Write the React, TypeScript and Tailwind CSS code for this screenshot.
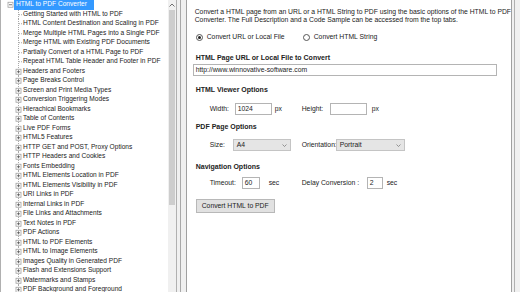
import React from 'react';

const children = [
  'Getting Started with HTML to PDF',
  'HTML Content Destination and Scaling in PDF',
  'Merge Multiple HTML Pages into a Single PDF',
  'Merge HTML with Existing PDF Documents',
  'Partially Convert of a HTML Page to PDF',
  'Repeat HTML Table Header and Footer in PDF',
];

const groups = [
  'Headers and Footers',
  'Page Breaks Control',
  'Screen and Print Media Types',
  'Conversion Triggering Modes',
  'Hierachical Bookmarks',
  'Table of Contents',
  'Live PDF Forms',
  'HTML5 Features',
  'HTTP GET and POST, Proxy Options',
  'HTTP Headers and Cookies',
  'Fonts Embedding',
  'HTML Elements Location in PDF',
  'HTML Elements Visibility in PDF',
  'URI Links in PDF',
  'Internal Links in PDF',
  'File Links and Attachments',
  'Text Notes in PDF',
  'PDF Actions',
  'HTML to PDF Elements',
  'HTML to Image Elements',
  'Images Quality in Generated PDF',
  'Flash and Extensions Support',
  'Watermarks and Stamps',
  'PDF Background and Foreground',
];

const Connector = ({ kind }: { kind: 'leaf' | 'group' }) => (
  <svg width="22" height="9.5" viewBox="0 0 22 9.5" className="shrink-0">
    <line x1="17.5" y1="0" x2="17.5" y2="9.5" stroke="#a8a8a8" strokeWidth="1" strokeDasharray="1 1" />
    {kind === 'leaf' && (
      <line x1="18" y1="4.75" x2="22" y2="4.75" stroke="#a8a8a8" strokeWidth="1" strokeDasharray="1 1" />
    )}
    {kind === 'group' && (
      <>
        <rect x="15" y="2.25" width="5" height="5" fill="#fff" stroke="#a0a0a0" strokeWidth="0.8" />
        <line x1="16" y1="4.75" x2="19" y2="4.75" stroke="#555" strokeWidth="0.8" />
        <line x1="17.5" y1="3.25" x2="17.5" y2="6.25" stroke="#555" strokeWidth="0.8" />
      </>
    )}
  </svg>
);

const Tree = () => (
  <div className="flex-1 flex flex-col overflow-hidden text-[6.6px] text-[#222] leading-none">
    <div className="h-[9.5px] flex items-center shrink-0">
      <svg width="13" height="9.5" viewBox="0 0 13 9.5" className="shrink-0">
        <rect x="7" y="2.25" width="5" height="5" fill="#fff" stroke="#a0a0a0" strokeWidth="0.8" />
        <line x1="8" y1="4.75" x2="11" y2="4.75" stroke="#555" strokeWidth="0.8" />
      </svg>
      <span className="h-[9.5px] flex items-center bg-[#3399ff] text-white px-[2px] w-[80px] whitespace-nowrap">
        HTML to PDF Converter
      </span>
    </div>
    {children.map((c) => (
      <div key={c} className="h-[9.5px] flex items-center shrink-0 whitespace-nowrap">
        <Connector kind="leaf" />
        <span>{c}</span>
      </div>
    ))}
    {groups.map((g) => (
      <div key={g} className="h-[9.5px] flex items-center shrink-0 whitespace-nowrap">
        <Connector kind="group" />
        <span>{g}</span>
      </div>
    ))}
  </div>
);

const ScrollBar = () => (
  <div className="w-[8px] bg-[#f0f0f0] flex flex-col items-stretch">
    <div className="h-[10px] flex items-center justify-center">
      <svg width="6" height="4" viewBox="0 0 6 4">
        <path d="M0.5 3.5 L3 1 L5.5 3.5" fill="none" stroke="#606060" strokeWidth="0.9" />
      </svg>
    </div>
    <div className="h-[195px] mx-[1px] bg-[#cdcdcd]" />
  </div>
);

const Field = ({ w, value }: { w: string; value: string }) => (
  <div className={`${w} shrink-0 h-[12px] border border-[#b4b4b4] bg-white flex items-center px-[2px]`}>{value}</div>
);

const Select = ({ w, value }: { w: string; value: string }) => (
  <div className={`${w} shrink-0 h-[12px] border border-[#c4c4c4] bg-[#e5e5e5] flex items-center justify-between px-[3px]`}>
    <span>{value}</span>
    <svg width="5" height="3" viewBox="0 0 5 3">
      <path d="M0.5 0.5 L2.5 2.5 L4.5 0.5" fill="none" stroke="#707070" strokeWidth="0.7" />
    </svg>
  </div>
);

const Radio = ({ checked, label }: { checked: boolean; label: string }) => (
  <div className="flex items-center gap-[4px] whitespace-nowrap">
    <span className="w-[7px] h-[7px] rounded-full border border-[#555] bg-white flex items-center justify-center">
      {checked && <span className="w-[3px] h-[3px] rounded-full bg-[#222]" />}
    </span>
    <span>{label}</span>
  </div>
);

const Label = ({ w, text }: { w: string; text: string }) => (
  <span className={`${w} shrink-0 whitespace-nowrap`}>{text}</span>
);

const Options = () => (
  <div className="flex-1 bg-white border-l border-r border-[#a0a0a0] flex flex-col pl-[9px] text-[6.8px] text-[#222] leading-[8px]">
    <p className="pt-[8px] -ml-[1px] whitespace-nowrap">
      Convert a HTML page from an URL or a HTML String to PDF using the basic options of the HTML to PDF
      <br />
      Converter. The Full Description and a Code Sample can be accessed from the top tabs.
    </p>

    <div className="mt-[8px] h-[10px] flex items-center">
      <div className="w-[107px] shrink-0">
        <Radio checked label="Convert URL or Local File" />
      </div>
      <Radio checked={false} label="Convert HTML String" />
    </div>

    <div className="mt-[12px] h-[8px] font-bold text-[7px]">HTML Page URL or Local File to Convert</div>
    <div className="mt-[2px] -ml-[3px] w-[304px] h-[12px] border border-[#b4b4b4] flex items-center px-[2px]">
      http://www.winnovative-software.com
    </div>

    <div className="mt-[10px] h-[8px] font-bold text-[7px]">HTML Viewer Options</div>
    <div className="mt-[9px] h-[12px] flex items-center ml-[14px]">
      <Label w="w-[25px]" text="Width:" />
      <Field w="w-[37px]" value="1024" />
      <span className="w-[30px] shrink-0 pl-[3px]">px</span>
      <Label w="w-[28px]" text="Height:" />
      <Field w="w-[37px]" value="" />
      <span className="pl-[5px]">px</span>
    </div>

    <div className="mt-[8px] h-[8px] font-bold text-[7px]">PDF Page Options</div>
    <div className="mt-[8px] h-[12px] flex items-center ml-[14px]">
      <Label w="w-[23px]" text="Size:" />
      <Select w="w-[58px]" value="A4" />
      <span className="w-[11px] shrink-0" />
      <Label w="w-[34px]" text="Orientation:" />
      <Select w="w-[69px]" value="Portrait" />
    </div>

    <div className="mt-[12px] h-[8px] font-bold text-[7px]">Navigation Options</div>
    <div className="mt-[6px] h-[12px] flex items-center ml-[14px]">
      <Label w="w-[32px]" text="Timeout:" />
      <Field w="w-[18px]" value="60" />
      <span className="w-[42px] shrink-0 pl-[9px]">sec</span>
      <Label w="w-[65px]" text="Delay Conversion :" />
      <Field w="w-[16px]" value="2" />
      <span className="pl-[4px]">sec</span>
    </div>

    <div className="mt-[10px] w-[79px] h-[14px] bg-[#e1e1e1] border border-[#b8b8b8] flex items-center justify-center whitespace-nowrap">
      Convert HTML to PDF
    </div>
  </div>
);

export default function App() {
  return (
    <div className="w-[520px] h-[292px] overflow-hidden flex bg-[#f0f0f0] font-['Liberation_Sans',Arial,sans-serif]">
      <div className="w-[177px] flex bg-white border-l border-r border-[#b0b0b0]">
        <Tree />
        <ScrollBar />
      </div>
      <div className="w-[3px]" />
      <div className="flex-1 flex border-l border-[#a8a8a8] pl-[5px]">
        <Options />
        <div className="w-[2px]" />
        <div className="w-[6px] border-l border-[#b0b0b0]" />
      </div>
    </div>
  );
}
